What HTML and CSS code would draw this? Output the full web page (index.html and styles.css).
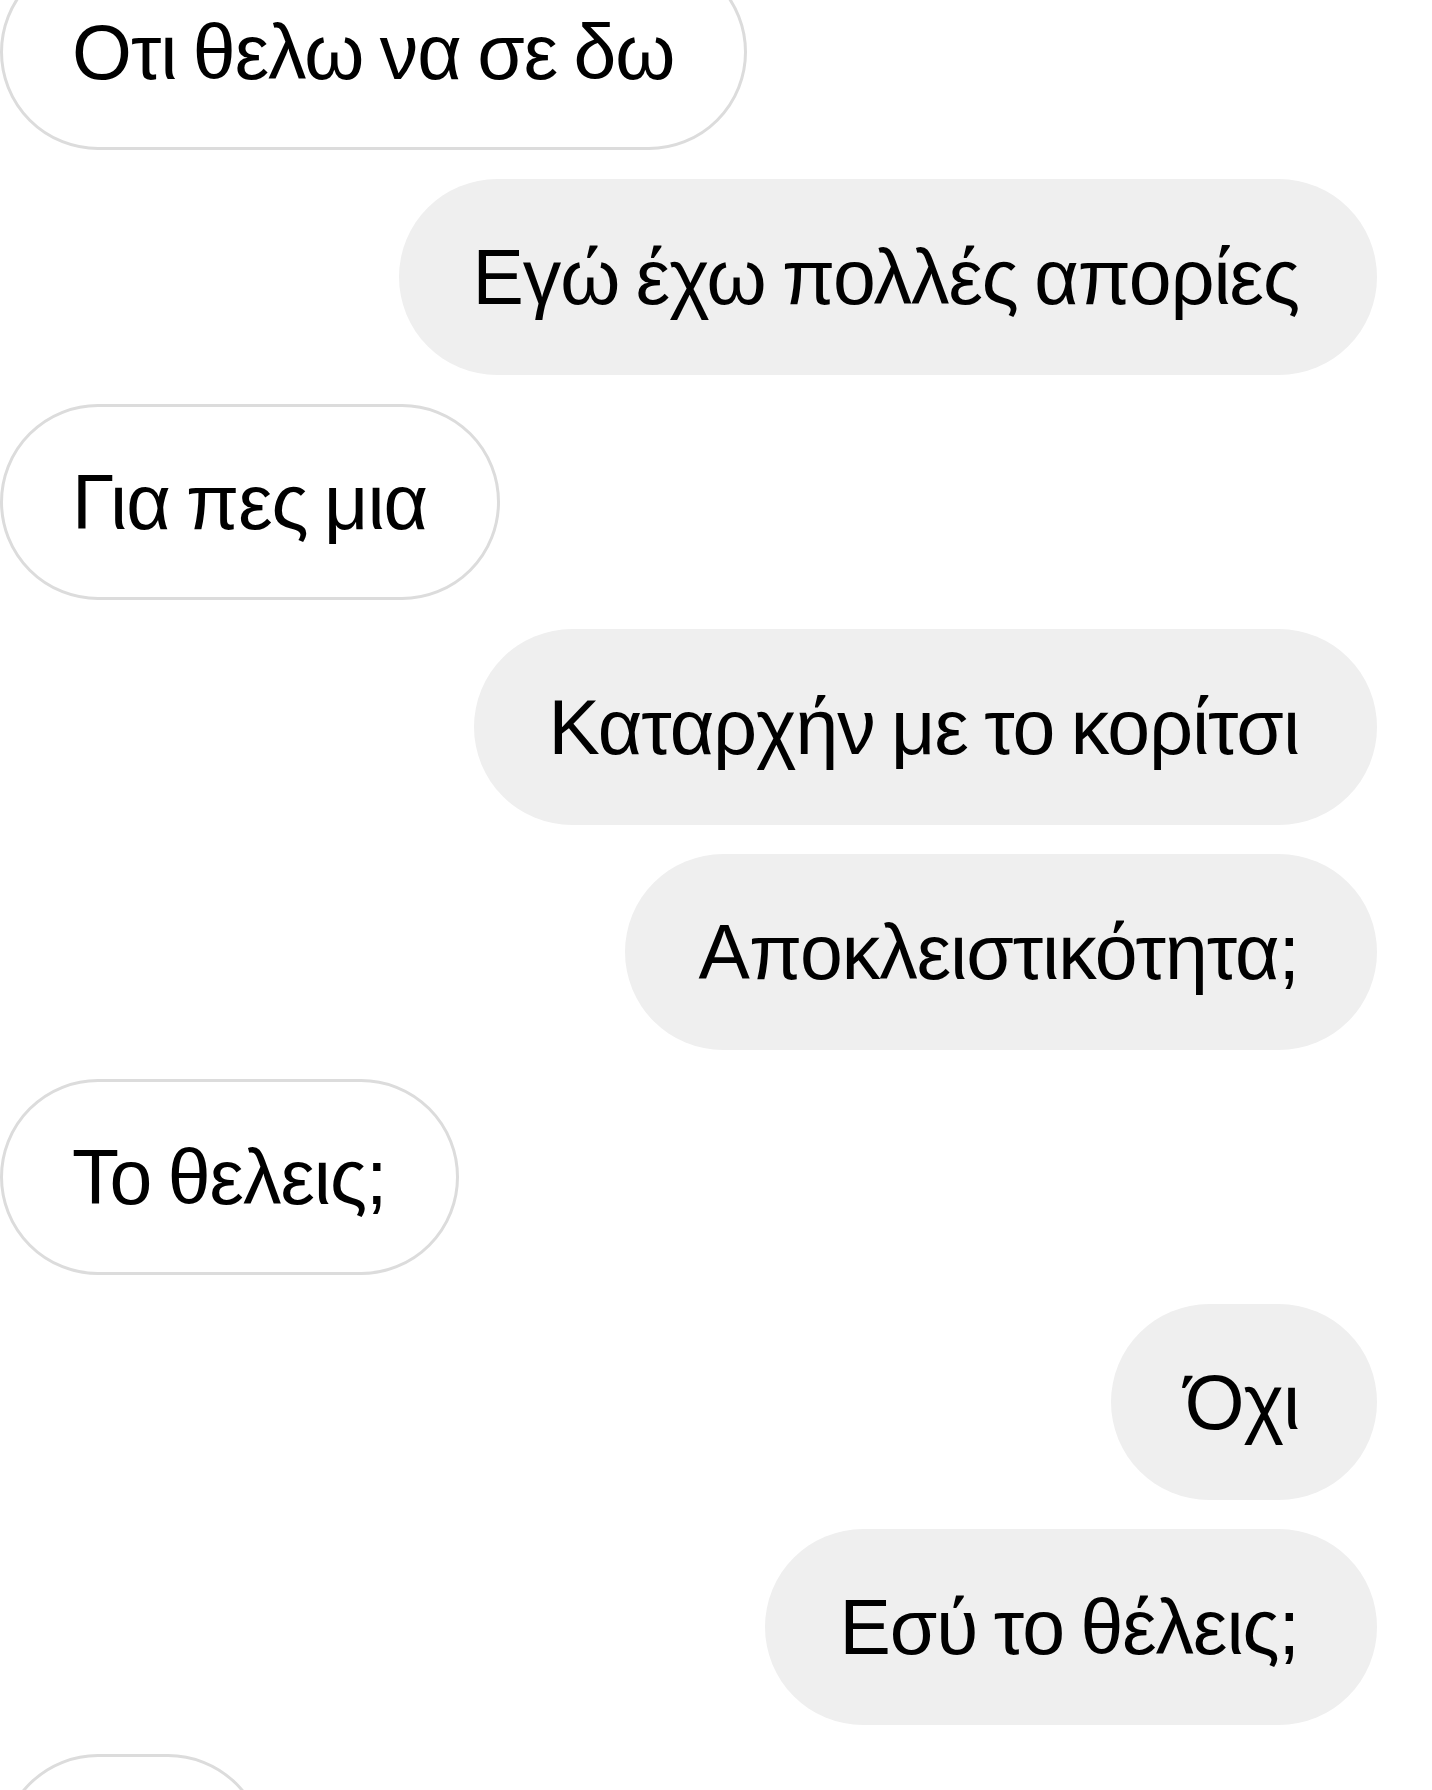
FILE: index.html
```html
<!DOCTYPE html>
<html lang="el">
<head>
<meta charset="utf-8">
<title>Chat</title>
<link rel="stylesheet" href="styles.css">
</head>
<body>
<div class="chat">
  <div class="msg in"><span>Οτι θελω να σε δω</span></div>
  <div class="msg out"><span>Εγώ έχω πολλές απορίες</span></div>
  <div class="msg in"><span>Για πες μια</span></div>
  <div class="msg out"><span>Καταρχήν με το κορίτσι</span></div>
  <div class="msg out"><span>Αποκλειστικότητα;</span></div>
  <div class="msg in"><span>Το θελεις;</span></div>
  <div class="msg out"><span>Όχι</span></div>
  <div class="msg out"><span>Εσύ το θέλεις;</span></div>
  <div class="msg in partial"></div>
</div>
</body>
</html>
```
FILE: styles.css
```css
html, body {
  margin: 0;
  padding: 0;
  background: #ffffff;
  overflow: hidden;
}
body {
  width: 1432px;
  height: 1790px;
  font-family: "Liberation Sans", Arial, sans-serif;
  color: #000;
}
.chat {
  display: flex;
  flex-direction: column;
  gap: 29px;
  margin-top: -46px;
  padding-right: 55px;
}
.msg {
  box-sizing: border-box;
  height: 196px;
  border-radius: 98px;
  display: flex;
  align-items: center;
  font-size: 77px;
  letter-spacing: -1px;
  word-spacing: -4px;
  line-height: 1;
  white-space: nowrap;
  flex-shrink: 0;
}
.msg span {
  display: block;
}
.in {
  align-self: flex-start;
  background: #fff;
  border: 3px solid #dcdcdc;
  padding: 0 70px 0 69px;
}
.out {
  align-self: flex-end;
  background: #efefef;
  padding: 0 78px 0 74px;
}
.partial {
  width: 266px;
}
```
